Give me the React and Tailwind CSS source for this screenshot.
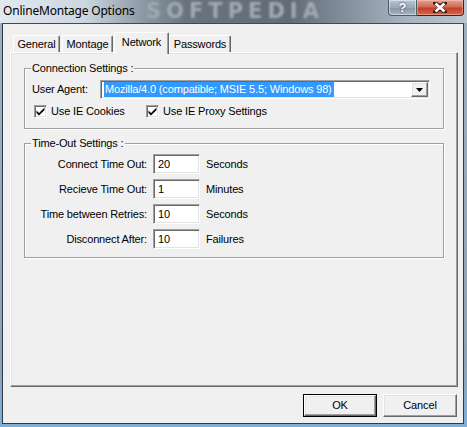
import React from "react";

const sunken =
  "border border-t-[#a0a0a0] border-l-[#a0a0a0] border-r-white border-b-white shadow-[inset_1px_1px_0_#696969,inset_-1px_-1px_0_#e3e3e3] bg-white";
const raised =
  "border border-t-white border-l-white border-r-[#696969] border-b-[#696969] shadow-[inset_-1px_-1px_0_#a0a0a0,inset_1px_1px_0_#e3e3e3] bg-[#f0f0f0]";

function Check() {
  return (
    <span className={`${sunken} w-[13px] h-[13px] flex items-center justify-center shrink-0`}>
      <svg width="9" height="9" viewBox="0 0 9 9">
        <path d="M0.5 3.6 L3 6 L8.5 0.6 L8.5 3 L3 8.4 L0.5 6 Z" fill="#000" />
      </svg>
    </span>
  );
}

function Tab({ label, w, selected }) {
  if (selected) {
    return (
      <div
        className="relative z-10 -mb-[2px] h-[22px] flex items-start justify-center pt-[3px] bg-[#f0f0f0] border-t border-l border-r border-t-white border-l-white border-r-[#696969] rounded-t-[2px] shadow-[inset_-1px_0_0_#a0a0a0]"
        style={{ width: w }}
      >
        {label}
      </div>
    );
  }
  return (
    <div
      className="h-[17px] flex items-start justify-center pt-[2px] bg-[#f0f0f0] border-t border-l border-r border-t-white border-l-white border-r-[#696969] rounded-t-[2px] shadow-[inset_-1px_0_0_#a0a0a0]"
      style={{ width: w }}
    >
      {label}
    </div>
  );
}

function Row({ label, value, unit }) {
  return (
    <>
      <div className="text-right pr-[1px]">{label}</div>
      <div className={`${sunken} h-[20px] flex items-center pl-[4px]`}>{value}</div>
      <div className="pl-[1px]">{unit}</div>
    </>
  );
}

export default function App() {
  return (
    <div className="w-[467px] h-[427px] flex flex-col bg-[linear-gradient(180deg,#9fb0c0_0%,#8fa3b6_85%,#7fb0d8_100%)] font-['Liberation_Sans',Arial,sans-serif] text-[11px] leading-[13px] tracking-[-0.15px] text-black overflow-hidden">
      {/* Title bar */}
      <div className="relative h-[23px] shrink-0 flex items-center pl-[3px] pb-[3px] bg-[linear-gradient(90deg,#e2e9f0_0%,#cdd7e1_18%,#8f9ba7_30%,#68737e_40%,#616c77_62%,#838f9b_74%,#a4b1be_86%,#b9c6d2_100%)]">
        <div className="absolute left-[146px] top-[1px] text-[21px] leading-[21px] font-bold tracking-[5px] text-[#a1aab3] blur-[0.8px] font-['DejaVu_Sans',sans-serif]">
          SOFTPEDIA
        </div>
        <span className="relative text-[12px] font-['Noto_Sans',sans-serif] tracking-[-0.2px]">OnlineMontage Options</span>
        <div className="absolute top-0 right-[3px] flex h-[16px]">
          <div className="w-[29px] h-[16px] rounded-bl-[4px] border border-t-0 border-[#4e5a66] bg-[linear-gradient(180deg,#b9c6d2_0%,#9aa9b8_50%,#8696a6_51%,#a5b5c4_100%)] shadow-[inset_0_0_0_1px_rgba(255,255,255,0.45)] flex items-center justify-center text-white font-bold text-[13px] leading-[13px] [text-shadow:0_0_2px_#223]">
            ?
          </div>
          <div className="w-[47px] h-[16px] rounded-br-[4px] border border-t-0 border-l-0 border-[#4a1c14] bg-[linear-gradient(180deg,#e3a393_0%,#d06a53_45%,#c2402a_55%,#d7674c_100%)] shadow-[inset_0_0_0_1px_rgba(255,210,200,0.45)] flex items-center justify-center">
            <svg width="14" height="11" viewBox="0 0 14 11">
              <path d="M2 1 L7 4.5 L12 1 M2 10 L7 6.5 L12 10" stroke="#3b1a14" strokeWidth="4" fill="none" strokeLinecap="round" />
              <path d="M2.5 1.5 L11.5 9.5 M11.5 1.5 L2.5 9.5" stroke="#fff" strokeWidth="2.6" fill="none" />
            </svg>
          </div>
        </div>
      </div>

      {/* Client */}
      <div className="flex-1 flex ml-[2px] mr-[3px] mb-[3px] border border-t-[#3d4a58] border-[#2e3a48] bg-[#f0f0f0]">
        <div className="flex-1 flex flex-col pl-[7px] pr-[5px] pt-[8px] pb-[6px]">
          {/* Tabs */}
          <div className="flex items-end h-[20px] pl-[3px]">
            <Tab label="General" w={47} />
            <div className="w-[2px]" />
            <Tab label="Montage" w={51} />
            <div className="w-[1px]" />
            <Tab label="Network" w={55} selected />
            <Tab label="Passwords" w={62} />
          </div>
          {/* Panel */}
          <div className="h-[335px] border border-t-white border-l-white border-r-[#696969] border-b-[#696969] shadow-[inset_-1px_-1px_0_#a0a0a0,inset_1px_1px_0_#e3e3e3] px-[13px] pt-[9px]">
            <fieldset className="border border-[#a0a0a0] shadow-[1px_1px_0_#fff,inset_1px_1px_0_#fff] px-0 pb-[10px] m-0">
              <legend className="ml-[6px] px-[1px] bg-[#f0f0f0]">Connection Settings :</legend>
              <div className="flex items-center pl-[7px] pr-[13px] pt-[5px]">
                <div className="w-[68px]">User Agent:</div>
                <div className={`${sunken} flex-1 h-[19px] flex items-center pl-[3px] pr-[1px]`}>
                  <span className="bg-[#3399ff] text-white h-[15px] flex items-center px-[1px]">
                    Mozilla/4.0 (compatible; MSIE 5.5; Windows 98)
                  </span>
                  <span className="w-[1px] h-[15px] bg-[#e07a20]" />
                  <div className="flex-1" />
                  <div className={`${raised} w-[17px] h-[15px] flex items-center justify-center`}>
                    <svg width="7" height="4" viewBox="0 0 7 4">
                      <path d="M0 0 H7 L3.5 4 Z" fill="#000" />
                    </svg>
                  </div>
                </div>
              </div>
              <div className="flex items-center pl-[9px] pt-[6px]">
                <Check />
                <span className="ml-[4px] w-[95px]">Use IE Cookies</span>
                <Check />
                <span className="ml-[4px]">Use IE Proxy Settings</span>
              </div>
            </fieldset>

            <fieldset className="mt-[8px] border border-[#a0a0a0] shadow-[1px_1px_0_#fff,inset_1px_1px_0_#fff] px-0 pb-[8px] m-0">
              <legend className="ml-[6px] px-[1px] bg-[#f0f0f0]">Time-Out Settings :</legend>
              <div className="grid grid-cols-[123px_47px_auto] gap-x-[5px] gap-y-[5px] items-center pt-[4px]">
                <Row label="Connect Time Out:" value="20" unit="Seconds" />
                <Row label="Recieve Time Out:" value="1" unit="Minutes" />
                <Row label="Time between Retries:" value="10" unit="Seconds" />
                <Row label="Disconnect After:" value="10" unit="Failures" />
              </div>
            </fieldset>
          </div>
          {/* Buttons */}
          <div className="flex justify-end gap-[6px] mt-[7px] pr-[1px]">
            <div className="w-[74px] h-[23px] border border-black">
              <div className={`${raised} w-full h-full flex items-center justify-center`}>OK</div>
            </div>
            <div className={`${raised} w-[74px] h-[23px] flex items-center justify-center`}>Cancel</div>
          </div>
        </div>
      </div>
    </div>
  );
}
